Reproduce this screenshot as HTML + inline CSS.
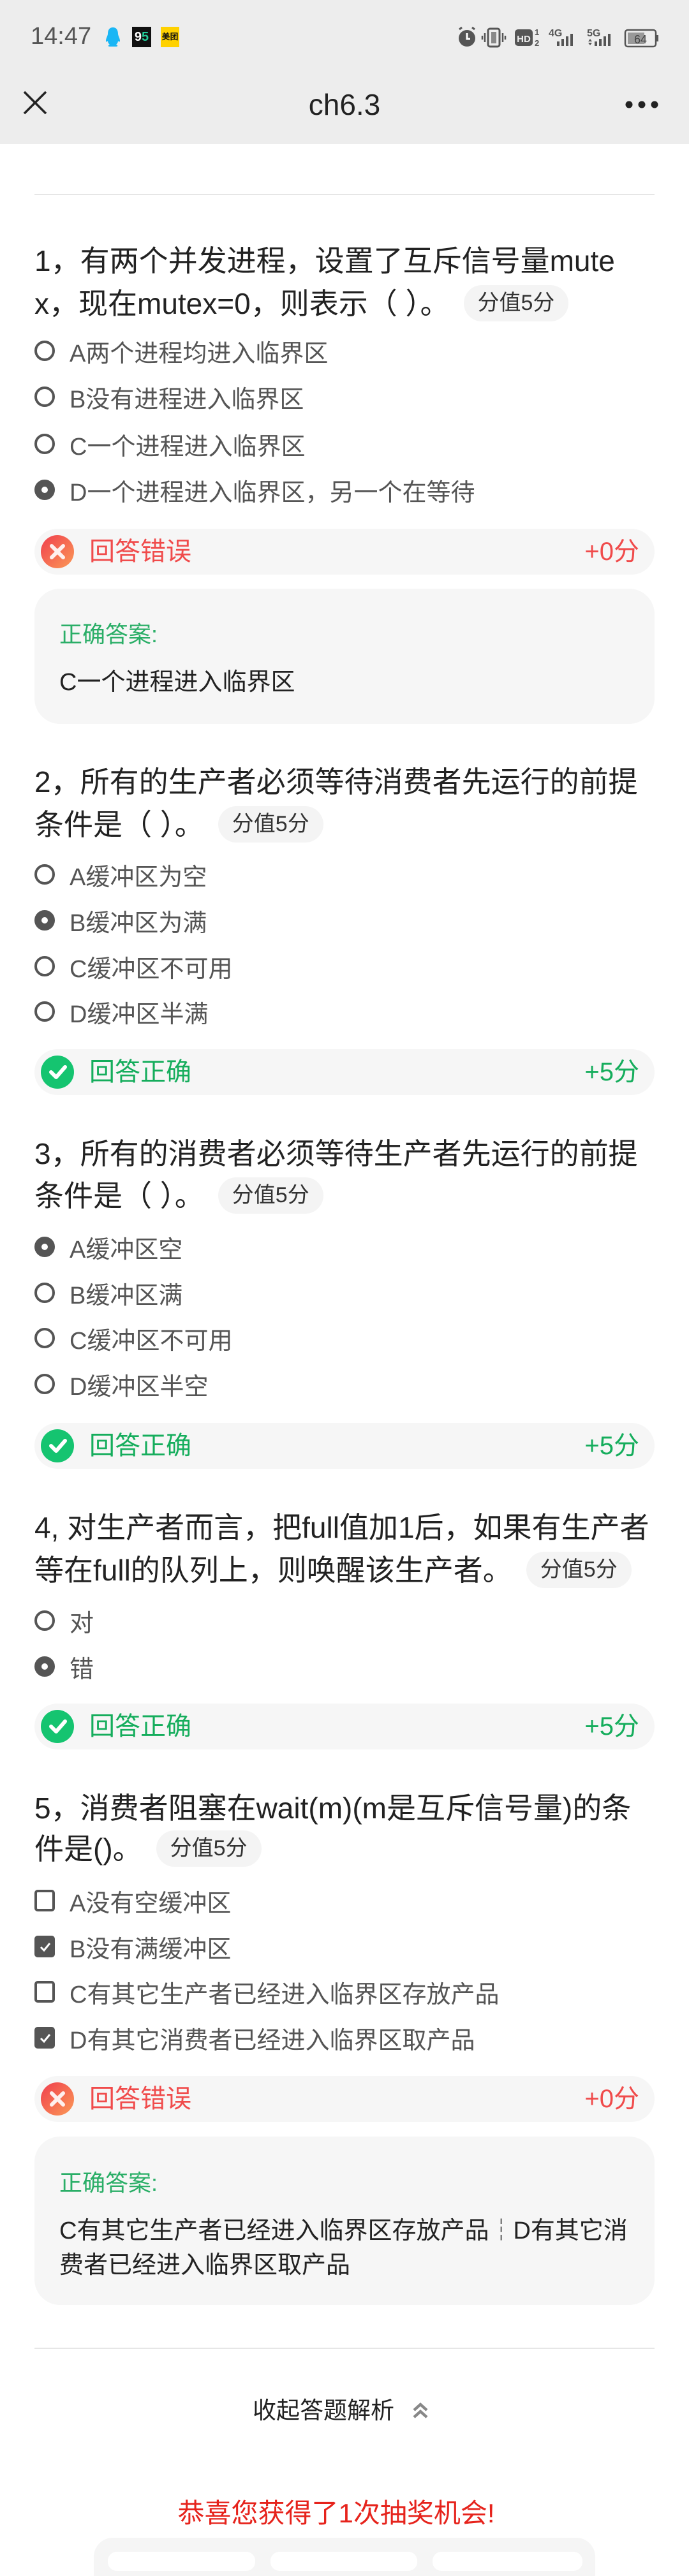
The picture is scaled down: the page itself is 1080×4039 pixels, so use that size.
<!DOCTYPE html>
<html><head><meta charset="utf-8">
<style>
*{margin:0;padding:0;box-sizing:border-box}
body{width:1080px;height:4012px;background:#fff;position:relative;overflow:hidden;font-family:"Liberation Sans","Noto Sans CJK SC",sans-serif;color:#222}
.abs{position:absolute}
.hdr{left:0;top:0;width:1080px;height:226px;background:#ededed}
.q{position:absolute;left:54px;font-size:46px;line-height:66px;height:66px;color:#222;white-space:nowrap}
.badge{display:inline-block;vertical-align:middle;font-size:34px;line-height:57px;height:57px;padding:0 22px;border-radius:29px;background:#f4f4f4;color:#333;margin-left:22px;position:relative;top:-4px}
.opt{position:absolute;left:54px;height:72px;display:flex;align-items:center;font-size:38px;color:#555;white-space:nowrap}
.rd{width:32px;height:32px;border-radius:50%;border:4px solid #555;margin-right:23px;flex:none;position:relative}
.rd.on{background:#555}
.rd.on::after{content:"";position:absolute;left:7px;top:7px;width:10px;height:10px;border-radius:50%;background:#fff}
.cb{width:32px;height:34px;border-radius:5px;border:4px solid #555;margin-right:23px;flex:none;position:relative}
.cb.on{background:#555}
.bar{position:absolute;left:54px;width:972px;height:72px;border-radius:36px;background:#f6f6f6}
.bar .ic{position:absolute;left:10px;top:10px;width:52px;height:52px;border-radius:50%}
.bar .t{position:absolute;left:86px;top:0;line-height:72px;font-size:40px}
.bar .s{position:absolute;right:24px;top:0;line-height:72px;font-size:40px}
.red .ic{background:linear-gradient(135deg,#f03e4e,#fb9a57)}
.red .t,.red .s{color:#f04b4b}
.grn .ic{background:#15c470}
.grn .t,.grn .s{color:#15ad5c}
.ans{position:absolute;left:54px;width:972px;background:#f6f6f6;border-radius:40px}
.ans .h{position:absolute;left:39px;font-size:36px;color:#2aae67;line-height:50px}
.ans .b{position:absolute;left:39px;font-size:38px;color:#222;line-height:54px;white-space:nowrap}
.line{position:absolute;left:54px;width:972px;height:2px;background:#e6e6e6}
</style></head><body>
<div class="abs hdr"></div>
<div class="abs" style="left:48px;top:35px;font-size:38px;line-height:44px;color:#555">14:47</div>
<svg class="abs" style="left:160px;top:42px" width="34" height="32" viewBox="0 0 34 32"><path d="M17 1c-6 0-8 5-8 10 0 3-3 7-3 11 0 2 2 2 3 0 0 3 2 5 3 6-3 1-3 3 0 3h10c3 0 3-2 0-3 1-1 3-3 3-6 1 2 3 2 3 0 0-4-3-8-3-11 0-5-2-10-8-10z" fill="#1ab6f5"/></svg>
<div class="abs" style="left:207px;top:42px;width:30px;height:32px;background:#111;color:#fff;font-size:20px;line-height:32px;text-align:center;font-weight:bold">9<span style="color:#2c9">5</span></div>
<div class="abs" style="left:252px;top:42px;width:29px;height:32px;background:#ffd100;color:#111;font-size:13px;line-height:32px;text-align:center;font-weight:bold">美团</div>
<svg class="abs" style="left:714px;top:40px" width="320" height="36" viewBox="0 0 320 36">
<circle cx="18" cy="20" r="13" fill="#555"/><path d="M18 12v9h5" stroke="#fff" stroke-width="3" fill="none"/><path d="M6 6l4-3M30 6l-4-3" stroke="#555" stroke-width="3"/>
<rect x="51" y="5" width="18" height="28" rx="3" fill="none" stroke="#555" stroke-width="3"/><rect x="56" y="10" width="8" height="18" fill="#888"/><path d="M46 12v14M74 12v14M42 16v6M78 16v6" stroke="#555" stroke-width="2.5"/>
<rect x="93" y="6" width="28" height="26" rx="5" fill="#555"/><text x="107" y="26" font-size="15" font-weight="bold" fill="#eee" text-anchor="middle" font-family="Liberation Sans">HD</text>
<text x="124" y="15" font-size="13" fill="#555" font-family="Liberation Sans" font-weight="bold">1</text><text x="124" y="32" font-size="13" fill="#555" font-family="Liberation Sans" font-weight="bold">2</text>
<text x="146" y="17" font-size="16" fill="#555" font-family="Liberation Sans" font-weight="bold">4G</text>
<rect x="159" y="25" width="4" height="7" fill="#555"/><rect x="166" y="21" width="4" height="11" fill="#555"/><rect x="173" y="17" width="4" height="15" fill="#555"/><rect x="180" y="13" width="4" height="19" fill="#555"/>
<text x="206" y="17" font-size="16" fill="#555" font-family="Liberation Sans" font-weight="bold">5G</text>
<path d="M208 25l3-4 3 4zM208 27l3 4 3-4z" fill="#555"/>
<rect x="218" y="25" width="4" height="7" fill="#555"/><rect x="225" y="21" width="4" height="11" fill="#555"/><rect x="232" y="17" width="4" height="15" fill="#555"/><rect x="239" y="13" width="4" height="19" fill="#555"/>
<rect x="266" y="7" width="48" height="26" rx="4" fill="none" stroke="#555" stroke-width="2.5"/><rect x="270" y="11" width="26" height="18" fill="#999"/><rect x="315" y="15" width="3" height="10" fill="#555"/>
<text x="290" y="28" font-size="18" fill="#444" text-anchor="middle" font-family="Liberation Sans">64</text>
</svg>
<svg class="abs" style="left:36px;top:142px" width="38" height="38" viewBox="0 0 38 38"><path d="M2 2L36 36M36 2L2 36" stroke="#222" stroke-width="3.5"/></svg>
<div class="abs" style="left:0;width:1080px;top:136px;text-align:center;font-size:46px;line-height:56px;color:#222">ch6.3</div>
<svg class="abs" style="left:978px;top:156px" width="56" height="16"><circle cx="8" cy="8" r="5.5" fill="#222"/><circle cx="28" cy="8" r="5.5" fill="#222"/><circle cx="48" cy="8" r="5.5" fill="#222"/></svg>
<div class="line" style="top:304px"></div>

<!-- Q1 -->
<div class="q" style="top:376px">1，有两个并发进程，设置了互斥信号量mute</div>
<div class="q" style="top:443px">x，现在mutex=0，则表示（ ）。<span class="badge">分值5分</span></div>
<div class="opt" style="top:514px"><span class="rd"></span>A两个进程均进入临界区</div>
<div class="opt" style="top:586px"><span class="rd"></span>B没有进程进入临界区</div>
<div class="opt" style="top:660px"><span class="rd"></span>C一个进程进入临界区</div>
<div class="opt" style="top:732px"><span class="rd on"></span>D一个进程进入临界区，另一个在等待</div>
<div class="bar red" style="top:829px"><span class="ic"></span><svg class="abs" style="left:22px;top:22px" width="28" height="28"><path d="M5 5L23 23M23 5L5 23" stroke="#fff" stroke-width="6" stroke-linecap="round" opacity=".9"/></svg><span class="t">回答错误</span><span class="s">+0分</span></div>
<div class="ans" style="top:923px;height:212px"><div class="h" style="top:47px">正确答案:</div><div class="b" style="top:120px">C一个进程进入临界区</div></div>

<!-- Q2 -->
<div class="q" style="top:1193px">2，所有的生产者必须等待消费者先运行的前提</div>
<div class="q" style="top:1260px">条件是（ ）。<span class="badge">分值5分</span></div>
<div class="opt" style="top:1335px"><span class="rd"></span>A缓冲区为空</div>
<div class="opt" style="top:1407px"><span class="rd on"></span>B缓冲区为满</div>
<div class="opt" style="top:1479px"><span class="rd"></span>C缓冲区不可用</div>
<div class="opt" style="top:1550px"><span class="rd"></span>D缓冲区半满</div>
<div class="bar grn" style="top:1645px"><span class="ic"></span><svg class="abs" style="left:22px;top:22px" width="30" height="28"><path d="M4 14L12 22L26 6" stroke="#fff" stroke-width="6" fill="none" stroke-linecap="round" stroke-linejoin="round"/></svg><span class="t">回答正确</span><span class="s">+5分</span></div>

<!-- Q3 -->
<div class="q" style="top:1776px">3，所有的消费者必须等待生产者先运行的前提</div>
<div class="q" style="top:1842px">条件是（ ）。<span class="badge">分值5分</span></div>
<div class="opt" style="top:1919px"><span class="rd on"></span>A缓冲区空</div>
<div class="opt" style="top:1991px"><span class="rd"></span>B缓冲区满</div>
<div class="opt" style="top:2062px"><span class="rd"></span>C缓冲区不可用</div>
<div class="opt" style="top:2134px"><span class="rd"></span>D缓冲区半空</div>
<div class="bar grn" style="top:2231px"><span class="ic"></span><svg class="abs" style="left:22px;top:22px" width="30" height="28"><path d="M4 14L12 22L26 6" stroke="#fff" stroke-width="6" fill="none" stroke-linecap="round" stroke-linejoin="round"/></svg><span class="t">回答正确</span><span class="s">+5分</span></div>

<!-- Q4 -->
<div class="q" style="top:2362px">4, 对生产者而言，把full值加1后，如果有生产者</div>
<div class="q" style="top:2429px">等在full的队列上，则唤醒该生产者。<span class="badge">分值5分</span></div>
<div class="opt" style="top:2505px"><span class="rd"></span>对</div>
<div class="opt" style="top:2577px"><span class="rd on"></span>错</div>
<div class="bar grn" style="top:2671px"><span class="ic"></span><svg class="abs" style="left:22px;top:22px" width="30" height="28"><path d="M4 14L12 22L26 6" stroke="#fff" stroke-width="6" fill="none" stroke-linecap="round" stroke-linejoin="round"/></svg><span class="t">回答正确</span><span class="s">+5分</span></div>

<!-- Q5 -->
<div class="q" style="top:2802px">5，消费者阻塞在wait(m)(m是互斥信号量)的条</div>
<div class="q" style="top:2866px">件是()。<span class="badge">分值5分</span></div>
<div class="opt" style="top:2944px"><span class="cb"></span>A没有空缓冲区</div>
<div class="opt" style="top:3016px"><span class="cb on"><svg class="abs" style="left:3px;top:5px" width="20" height="18"><path d="M3 9L8 14L17 3" stroke="#fff" stroke-width="3" fill="none"/></svg></span>B没有满缓冲区</div>
<div class="opt" style="top:3087px"><span class="cb"></span>C有其它生产者已经进入临界区存放产品</div>
<div class="opt" style="top:3159px"><span class="cb on"><svg class="abs" style="left:3px;top:5px" width="20" height="18"><path d="M3 9L8 14L17 3" stroke="#fff" stroke-width="3" fill="none"/></svg></span>D有其它消费者已经进入临界区取产品</div>
<div class="bar red" style="top:3255px"><span class="ic"></span><svg class="abs" style="left:22px;top:22px" width="28" height="28"><path d="M5 5L23 23M23 5L5 23" stroke="#fff" stroke-width="6" stroke-linecap="round" opacity=".9"/></svg><span class="t">回答错误</span><span class="s">+0分</span></div>
<div class="ans" style="top:3350px;height:264px"><div class="h" style="top:48px">正确答案:</div><div class="b" style="top:121px">C有其它生产者已经进入临界区存放产品┆D有其它消</div><div class="b" style="top:175px">费者已经进入临界区取产品</div></div>

<div class="line" style="top:3681px"></div>
<div class="abs" style="left:396px;top:3756px;font-size:37px;line-height:48px;color:#222">收起答题解析</div>
<svg class="abs" style="left:646px;top:3766px" width="26" height="28"><path d="M3 13L13 4L23 13M3 24L13 15L23 24" stroke="#888" stroke-width="4.5" fill="none"/></svg>
<div class="abs" style="left:0;width:1054px;top:3915px;text-align:center;font-size:42px;line-height:52px;color:#e6231c">恭喜您获得了1次抽奖机会!</div>
<div class="abs" style="left:147px;top:3979px;width:786px;height:60px;border-radius:30px 30px 0 0;background:#f5f5f5"></div>
<div class="abs" style="left:169px;top:4001px;width:231px;height:30px;border-radius:14px;background:#fff"></div>
<div class="abs" style="left:424px;top:4001px;width:230px;height:30px;border-radius:14px;background:#fff"></div>
<div class="abs" style="left:678px;top:4001px;width:235px;height:30px;border-radius:14px;background:#fff"></div>
</body></html>
